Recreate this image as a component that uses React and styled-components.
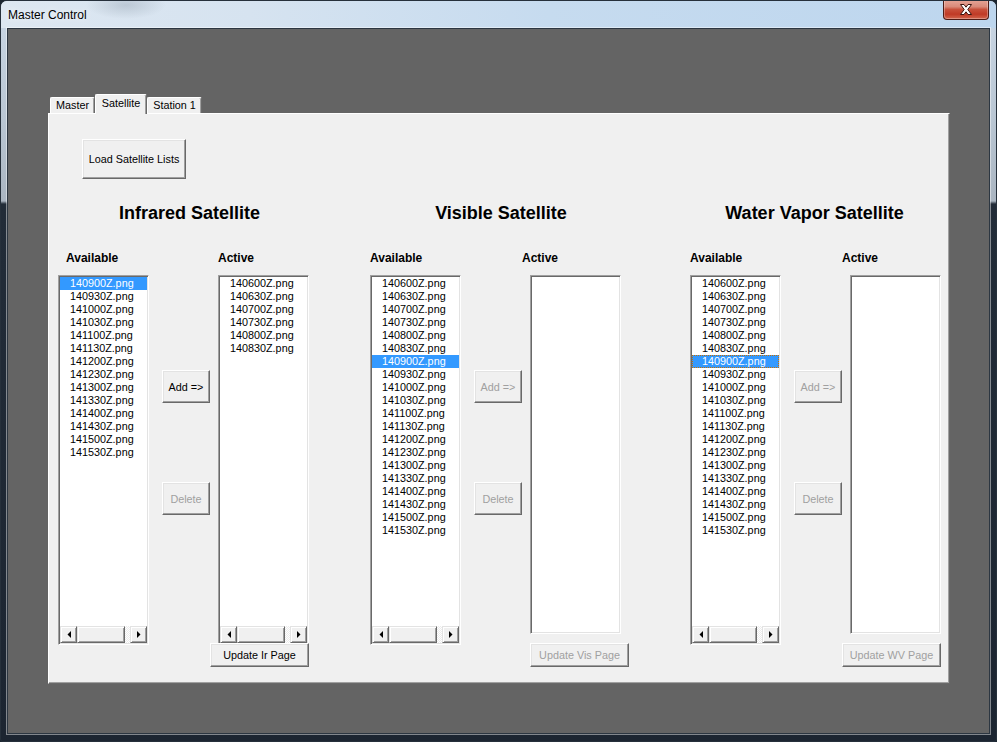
import React from 'react';
import styled, { createGlobalStyle } from 'styled-components';

const GlobalStyle = createGlobalStyle`
  html, body { margin: 0; padding: 0; background: #1b2530; }
  body { width: 997px; height: 742px; overflow: hidden; font-family: "Liberation Sans", Arial, sans-serif; }
  #root { width: 997px; height: 742px; }
`;

const UI_FONT = `"Liberation Sans", Arial, sans-serif`;

const Window = styled.div`
  box-sizing: border-box;
  width: 997px;
  height: 742px;
  display: flex;
  flex-direction: column;
  border: 1px solid #26303b;
  border-radius: 7px 7px 3px 3px;
  overflow: hidden;
  background: linear-gradient(180deg, #cbd8e6 0px, #b9c6d3 120px, #aab5c1 200px, #222c38 203px, #1c2531 100%);
`;

const TitleBar = styled.div`
  height: 27px;
  flex-shrink: 0;
  display: flex;
  justify-content: space-between;
  align-items: flex-start;
  padding-left: 7px;
  background:
    radial-gradient(ellipse 40px 14px at 125px 4px, rgba(120, 135, 150, 0.3), rgba(120, 135, 150, 0) 100%),
    linear-gradient(90deg, #dde7f1 0%, #d6e3f0 25%, #c6dbef 55%, #bdd6ee 100%);
`;

const Title = styled.div`
  margin-top: 6px;
  font-family: ${UI_FONT};
  font-size: 12px;
  line-height: 16px;
  color: #000;
  text-shadow: 0 0 6px rgba(255, 255, 255, 0.9);
`;

const CloseButton = styled.div`
  box-sizing: border-box;
  width: 46px;
  height: 20px;
  margin-top: -1px;
  margin-right: 7px;
  border: 1px solid #4e1c16;
  border-top: none;
  border-radius: 0 0 4px 4px;
  background: linear-gradient(180deg, #e6a597 0%, #d98a7a 35%, #c8503b 50%, #c03a26 75%, #d2664d 100%);
  box-shadow: inset 0 0 0 1px rgba(255, 255, 255, 0.3);
  display: flex;
  align-items: center;
  justify-content: center;
`;

const MiddleRow = styled.div`
  flex: 1;
  display: flex;
  padding: 0 6px;
  min-height: 0;
`;

const Client = styled.div`
  flex: 1;
  border: 1px solid #2c3641;
  box-shadow: 0 0 0 1px rgba(255, 255, 255, 0.45);
  background: #646464;
  padding: 65px 0 0 40px;
`;

const BottomFrame = styled.div`
  height: 7px;
  flex-shrink: 0;
`;

const TabControl = styled.div`
  width: 902px;
  display: flex;
  flex-direction: column;
`;

const TabStrip = styled.div`
  display: flex;
  align-items: flex-end;
  height: 19px;
  padding-left: 2px;
`;

const Tab = styled.div`
  box-sizing: border-box;
  width: ${(p) => p.$w}px;
  height: ${(p) => (p.$selected ? 20 : 16)}px;
  margin-bottom: ${(p) => (p.$selected ? -1 : 0)}px;
  position: relative;
  z-index: ${(p) => (p.$selected ? 2 : 1)};
  background: #f0f0f0;
  border: 1px solid;
  border-color: #fff #696969 transparent #fff;
  border-bottom: none;
  border-radius: 2px 2px 0 0;
  box-shadow: inset -1px 0 #a0a0a0;
  font-family: ${UI_FONT};
  font-size: 10.8px;
  line-height: 14px;
  padding-top: ${(p) => (p.$selected ? 1 : 0)}px;
  text-align: center;
  color: #000;
  white-space: nowrap;
`;

const Panel = styled.div`
  box-sizing: border-box;
  width: 902px;
  height: 571px;
  background: #f0f0f0;
  border: 1px solid;
  border-color: #fff #696969 #696969 #fff;
  box-shadow: inset -1px -1px #a0a0a0;
  display: flex;
  flex-direction: column;
  align-items: flex-start;
`;

const WinButton = styled.button`
  box-sizing: border-box;
  width: ${(p) => p.$w}px;
  height: ${(p) => p.$h}px;
  flex-shrink: 0;
  margin: 0;
  padding: 0;
  background: #f0f0f0;
  border: 1px solid;
  border-color: #fff #696969 #696969 #fff;
  border-radius: 0;
  box-shadow: inset -1px -1px #a0a0a0, inset 1px 1px #e3e3e3;
  font-family: ${UI_FONT};
  font-size: 10.8px;
  color: ${(p) => (p.disabled ? '#a0a0a0' : '#000')};
  display: flex;
  align-items: center;
  justify-content: center;
  white-space: nowrap;
  position: relative;
`;

const LoadButton = styled(WinButton)`
  margin: 25px 0 0 33px;
`;

const GroupsRow = styled.div`
  display: flex;
  margin: 24px 0 0 9px;
`;

const Group = styled.div`
  width: 251px;
  flex-shrink: 0;
  margin-left: ${(p) => p.$ml}px;
  display: flex;
  flex-direction: column;
`;

const Heading = styled.h2`
  box-sizing: border-box;
  margin: 0;
  height: 20px;
  font-family: ${UI_FONT};
  font-weight: bold;
  font-size: 18px;
  line-height: 20px;
  color: #000;
  text-align: center;
  white-space: nowrap;
  padding-left: ${(p) => Math.max(0, p.$shift * 2)}px;
  padding-right: ${(p) => Math.max(0, -p.$shift * 2)}px;
`;

const Columns = styled.div`
  display: flex;
  align-items: flex-start;
  margin-top: 28px;
`;

const ListColumn = styled.div`
  width: 91px;
  flex-shrink: 0;
  display: flex;
  flex-direction: column;
`;

const ColLabel = styled.div`
  height: 14px;
  margin: 0 0 10px ${(p) => p.$off}px;
  font-family: ${UI_FONT};
  font-weight: bold;
  font-size: 12px;
  line-height: 14px;
  color: #000;
  white-space: nowrap;
`;

const ListBox = styled.div`
  box-sizing: border-box;
  width: 91px;
  height: ${(p) => p.$h}px;
  flex-shrink: 0;
  background: #fff;
  border: 1px solid;
  border-color: #a0a0a0 #fff #fff #a0a0a0;
  box-shadow: inset 1px 1px #696969, inset -1px -1px #e3e3e3;
  padding: 1px;
  display: flex;
  flex-direction: column;
  overflow: hidden;
`;

const Items = styled.div`
  flex: 1;
  overflow: hidden;
`;

const Item = styled.div`
  height: 13px;
  line-height: 13px;
  padding-left: 10px;
  font-family: ${UI_FONT};
  font-size: 10.8px;
  white-space: nowrap;
  background: ${(p) => (p.$selected ? '#3399ff' : 'transparent')};
  color: ${(p) => (p.$selected ? '#fff' : '#000')};
  outline: ${(p) => (p.$focus ? '1px dotted #c87000' : 'none')};
  outline-offset: -1px;
`;

const HScroll = styled.div`
  height: 17px;
  flex-shrink: 0;
  display: flex;
  background: repeating-conic-gradient(#ffffff 0 25%, #ececec 0 50%) 0 0 / 2px 2px;
`;

const ScrollPart = styled.div`
  box-sizing: border-box;
  width: ${(p) => p.$w}px;
  height: 17px;
  flex-shrink: 0;
  background: #f0f0f0;
  border: 1px solid;
  border-color: #e3e3e3 #696969 #696969 #e3e3e3;
  box-shadow: inset 1px 1px #fff, inset -1px -1px #a0a0a0;
  display: flex;
  align-items: center;
  justify-content: center;
`;

const Track = styled.div`
  flex: 1;
`;

const ButtonColumn = styled.div`
  width: 48px;
  flex-shrink: 0;
  margin: 0 8px 0 13px;
  padding-top: 119px;
  display: flex;
  flex-direction: column;
`;

const DeleteButton = styled(WinButton)`
  margin-top: 79px;
`;

const UpdateButton = styled(WinButton)`
  margin-left: ${(p) => p.$off}px;
  margin-top: ${(p) => p.$top}px;
`;

const Arrow = ({ dir }) => (
  <svg width="4" height="7" viewBox="0 0 4 7">
    {dir === 'left' ? <polygon points="4,0 4,7 0.5,3.5" fill="#000" /> : <polygon points="0,0 0,7 3.5,3.5" fill="#000" />}
  </svg>
);

const ScrollBar = () => (
  <HScroll>
    <ScrollPart $w={17}><Arrow dir="left" /></ScrollPart>
    <ScrollPart $w={48} />
    <Track />
    <ScrollPart $w={17}><Arrow dir="right" /></ScrollPart>
  </HScroll>
);

const FileList = ({ items, height, selected = -1, focus = false, scroll = false }) => (
  <ListBox $h={height}>
    <Items>
      {items.map((f, i) => (
        <Item key={f} $selected={i === selected} $focus={focus && i === selected}>{f}</Item>
      ))}
    </Items>
    {scroll && <ScrollBar />}
  </ListBox>
);

const files = [
  '140600Z.png', '140630Z.png', '140700Z.png', '140730Z.png', '140800Z.png', '140830Z.png',
  '140900Z.png', '140930Z.png', '141000Z.png', '141030Z.png', '141100Z.png', '141130Z.png',
  '141200Z.png', '141230Z.png', '141300Z.png', '141330Z.png', '141400Z.png', '141430Z.png',
  '141500Z.png', '141530Z.png',
];

const groups = [
  {
    title: 'Infrared Satellite', shift: 6, ml: 0, availOff: 8, activeOff: 0,
    avail: files.slice(6), availSel: 0, focus: false,
    active: files.slice(0, 6), activeScroll: true, activeH: 370,
    disabled: false, update: 'Update Ir Page', updOff: -8, updTop: -2,
  },
  {
    title: 'Visible Satellite', shift: 5.5, ml: 61, availOff: 0, activeOff: -8,
    avail: files, availSel: 6, focus: false,
    active: [], activeScroll: false, activeH: 359,
    disabled: true, update: 'Update Vis Page', updOff: 0, updTop: 9,
  },
  {
    title: 'Water Vapor Satellite', shift: -1, ml: 69, availOff: 0, activeOff: -8,
    avail: files, availSel: 6, focus: true,
    active: [], activeScroll: false, activeH: 359,
    disabled: true, update: 'Update WV Page', updOff: -8, updTop: 9,
  },
];

const SatelliteGroup = ({ g }) => (
  <Group $ml={g.ml}>
    <Heading $shift={g.shift}>{g.title}</Heading>
    <Columns>
      <ListColumn>
        <ColLabel $off={g.availOff}>Available</ColLabel>
        <FileList items={g.avail} height={370} selected={g.availSel} focus={g.focus} scroll />
      </ListColumn>
      <ButtonColumn>
        <WinButton $w={48} $h={33} disabled={g.disabled}>Add =&gt;</WinButton>
        <DeleteButton $w={48} $h={33} disabled>Delete</DeleteButton>
      </ButtonColumn>
      <ListColumn>
        <ColLabel $off={g.activeOff}>Active</ColLabel>
        <FileList items={g.active} height={g.activeH} scroll={g.activeScroll} />
        <UpdateButton $w={99} $h={24} $off={g.updOff} $top={g.updTop} disabled={g.disabled}>
          {g.update}
        </UpdateButton>
      </ListColumn>
    </Columns>
  </Group>
);

export default function App() {
  return (
    <>
      <GlobalStyle />
      <Window>
        <TitleBar>
          <Title>Master Control</Title>
          <CloseButton>
            <svg width="14" height="11" viewBox="0 0 14 11">
              <path
                d="M1.5 0.5 H5 L7 3.2 L9 0.5 H12.5 L8.8 5.5 L12.5 10.5 H9 L7 7.8 L5 10.5 H1.5 L5.2 5.5 Z"
                fill="#fff"
                stroke="#3d1610"
                strokeWidth="1"
                strokeLinejoin="round"
              />
            </svg>
          </CloseButton>
        </TitleBar>
        <MiddleRow>
          <Client>
            <TabControl>
              <TabStrip>
                <Tab $w={45}>Master</Tab>
                <Tab $w={52} $selected>Satellite</Tab>
                <Tab $w={55}>Station 1</Tab>
              </TabStrip>
              <Panel>
                <LoadButton $w={104} $h={40}>Load Satellite Lists</LoadButton>
                <GroupsRow>
                  {groups.map((g) => (
                    <SatelliteGroup key={g.title} g={g} />
                  ))}
                </GroupsRow>
              </Panel>
            </TabControl>
          </Client>
        </MiddleRow>
        <BottomFrame />
      </Window>
    </>
  );
}
